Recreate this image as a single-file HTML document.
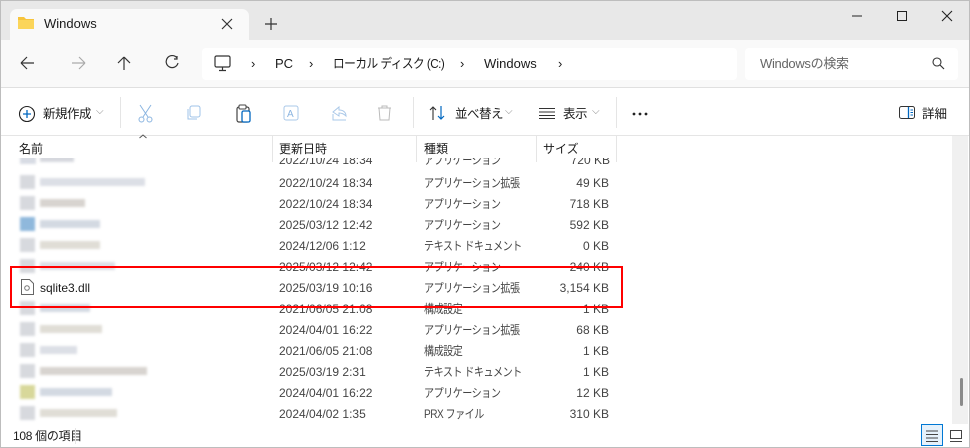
<!DOCTYPE html>
<html><head><meta charset="utf-8"><style>
*{margin:0;padding:0;box-sizing:border-box}
body{width:970px;height:448px;overflow:hidden;background:#fff;font-family:"Liberation Sans","Noto Sans CJK JP",sans-serif;color:#1a1a1a;position:relative;font-size:12px}
.abs{position:absolute}
#frame{position:absolute;left:0;top:0;width:970px;height:448px;border:1px solid #bdbdbd;pointer-events:none}
.t{position:absolute;white-space:nowrap;line-height:16px}
.j{letter-spacing:-0.6px;font-size:12px;transform:scaleX(0.84);transform-origin:left center}
.blk{position:absolute;filter:blur(1.2px)}
</style></head><body>
<!-- title bar -->
<div class="abs" style="left:0;top:0;width:970px;height:40px;background:#e8e8e8"></div>
<div class="abs" style="left:10px;top:9px;width:239px;height:32px;background:#f9f9f9;border-radius:7px 7px 0 0"></div>
<svg class="abs" style="left:17px;top:15px" width="18" height="16"><path d="M1 2h6l2 2h8v10H1z" fill="#f7c43c"/><path d="M1 5h16v9H1z" fill="#fbd55a"/></svg>
<div class="t" style="left:44px;top:16px;font-size:13px">Windows</div>
<svg class="abs" style="left:221px;top:18px" width="12" height="12"><path d="M1 1L11 11M11 1L1 11" stroke="#333" stroke-width="1.2"/></svg>
<svg class="abs" style="left:265px;top:18px" width="12" height="12"><path d="M6 0V12M0 6H12" stroke="#333" stroke-width="1.2"/></svg>
<svg class="abs" style="left:850px;top:10px" width="110" height="14"><path d="M2 6H12" stroke="#222"/><path d="M47.5 1.5h9v9h-9z" stroke="#222" fill="none"/><path d="M92 1L102 11M102 1L92 11" stroke="#222" stroke-width="1.1"/></svg>
<!-- nav bar -->
<div class="abs" style="left:0;top:40px;width:970px;height:48px;background:#f9f9f9;border-bottom:1px solid #e0e0e0"></div>
<svg class="abs" style="left:18px;top:55px" width="170" height="16"><path d="M3 8H16M3 8L9 2M3 8L9 14" stroke="#333" stroke-width="1.2" fill="none"/><path d="M54 8H67M67 8L61 2M67 8L61 14" stroke="#aaa" stroke-width="1.2" fill="none"/><path d="M106 15V2M106 2L100 8M106 2L112 8" stroke="#333" stroke-width="1.2" fill="none"/><path d="M159 3A6 6 0 1 0 160 8M159 1V4H156" stroke="#333" stroke-width="1.2" fill="none"/></svg>
<div class="abs" style="left:202px;top:48px;width:535px;height:32px;background:#fff;border-radius:4px"></div>
<svg class="abs" style="left:214px;top:55px" width="18" height="17"><rect x="1" y="1" width="15" height="11" rx="1.5" stroke="#333" fill="none" stroke-width="1.2"/><path d="M8.5 12V15M5 15.5H12" stroke="#333" stroke-width="1.2"/></svg>
<div class="t" style="left:251px;top:56px;font-size:13px">›</div>
<div class="t" style="left:275px;top:56px;font-size:13px">PC</div>
<div class="t" style="left:309px;top:56px;font-size:13px">›</div>
<div class="t" style="left:333px;top:56px;font-size:13px;letter-spacing:-0.6px;transform:scaleX(0.9);transform-origin:left center">ローカル ディスク (C:)</div>
<div class="t" style="left:460px;top:56px;font-size:13px">›</div>
<div class="t" style="left:484px;top:56px;font-size:13px">Windows</div>
<div class="t" style="left:558px;top:56px;font-size:13px">›</div>
<div class="abs" style="left:745px;top:48px;width:213px;height:32px;background:#fff;border-radius:4px"></div>
<div class="t" style="left:760px;top:56px;font-size:13px;color:#666;letter-spacing:-0.3px">Windowsの検索</div>
<svg class="abs" style="left:932px;top:57px" width="13" height="13"><circle cx="5" cy="5" r="4" stroke="#333" fill="none" stroke-width="1.1"/><path d="M8 8L12 12" stroke="#333" stroke-width="1.2"/></svg>
<!-- toolbar -->
<div class="abs" style="left:0;top:135px;width:970px;height:1px;background:#e5e5e5"></div>
<svg class="abs" style="left:18px;top:105px" width="18" height="18"><circle cx="9" cy="9" r="7.5" stroke="#222" fill="none" stroke-width="1.1"/><path d="M9 5V13M5 9H13" stroke="#0067c0" stroke-width="1.3"/></svg>
<div class="t" style="left:43px;top:106px;font-size:12.5px;letter-spacing:-0.5px">新規作成</div>
<div class="t" style="left:96px;top:104px;font-size:10px;color:#888">⌵</div>
<div class="abs" style="left:120px;top:97px;width:1px;height:31px;background:#e5e5e5"></div>
<svg class="abs" style="left:138px;top:104px" width="280" height="20"><circle cx="3.5" cy="15.5" r="2.5" stroke="#8ab4e0" fill="none"/><circle cx="11.5" cy="15.5" r="2.5" stroke="#8ab4e0" fill="none"/><path d="M2 1L10 13M13 1L5 13" stroke="#8ab4e0"/><rect x="52" y="2" width="10" height="11" rx="2" stroke="#9fc3e8" fill="none"/><path d="M50 5V15H59" stroke="#9fc3e8" fill="none"/><rect x="99" y="3" width="12" height="15" rx="2" stroke="#444" fill="none" stroke-width="1.2"/><rect x="104" y="7" width="8" height="11" rx="1.5" stroke="#0067c0" fill="#fff" stroke-width="1.3"/><rect x="101" y="1" width="7" height="4" rx="1" stroke="#444" fill="#fff"/><rect x="146" y="2" width="14" height="14" rx="2" stroke="#aac8e8" fill="none"/><text x="149" y="13" font-size="10" fill="#8ab4e0" font-family="Liberation Sans">A</text><path d="M195 8l6-5v3c5 0 7 3 7 6-2-2-4-3-7-3v3z" stroke="#aac8e8" fill="none"/><path d="M195 10V16H208" stroke="#aac8e8" fill="none"/><path d="M240 4H253M244 4V2H249V4M241 4L242 16H251L252 4" stroke="#bbb" fill="none"/></svg>
<div class="abs" style="left:413px;top:97px;width:1px;height:31px;background:#e5e5e5"></div>
<svg class="abs" style="left:429px;top:105px" width="18" height="16"><path d="M4 15V2M1 5L4 2L7 5" stroke="#333" fill="none" stroke-width="1.1"/><path d="M12 1V14M9 11L12 14L15 11" stroke="#0067c0" fill="none" stroke-width="1.2"/></svg>
<div class="t" style="left:455px;top:106px;font-size:12.5px;letter-spacing:-0.5px">並べ替え</div>
<div class="t" style="left:505px;top:104px;font-size:10px;color:#888">⌵</div>
<svg class="abs" style="left:539px;top:107px" width="16" height="12"><path d="M0 1.5H16M0 5H16M0 8.5H16M0 11.5H16" stroke="#333"/></svg>
<div class="t" style="left:563px;top:106px;font-size:12.5px;letter-spacing:-0.5px">表示</div>
<div class="t" style="left:592px;top:104px;font-size:10px;color:#888">⌵</div>
<div class="abs" style="left:616px;top:97px;width:1px;height:31px;background:#e5e5e5"></div>
<svg class="abs" style="left:632px;top:112px" width="20" height="4"><circle cx="2" cy="2" r="1.4" fill="#222"/><circle cx="8" cy="2" r="1.4" fill="#222"/><circle cx="14" cy="2" r="1.4" fill="#222"/></svg>
<svg class="abs" style="left:899px;top:106px" width="17" height="14"><rect x="0.5" y="0.5" width="15" height="12" rx="2" stroke="#333" fill="none"/><path d="M9.5 1V12" stroke="#0067c0" stroke-width="1.3"/><path d="M11.5 4H14M11.5 6.5H14M11.5 9H14" stroke="#0067c0"/></svg>
<div class="t" style="left:922px;top:106px;font-size:12.5px">詳細</div>
<!-- header -->
<svg class="abs" style="left:139px;top:134px" width="8" height="5"><path d="M0.5 4L4 1L7.5 4" stroke="#555" fill="none"/></svg>
<div class="t" style="left:19px;top:141px">名前</div>
<div class="t" style="left:279px;top:141px">更新日時</div>
<div class="t" style="left:424px;top:141px">種類</div>
<div class="t" style="left:543px;top:141px">サイズ</div>
<div class="abs" style="left:272px;top:136px;width:1px;height:26px;background:#e5e5e5"></div>
<div class="abs" style="left:416px;top:136px;width:1px;height:26px;background:#e5e5e5"></div>
<div class="abs" style="left:536px;top:136px;width:1px;height:26px;background:#e5e5e5"></div>
<div class="abs" style="left:616px;top:136px;width:1px;height:26px;background:#e5e5e5"></div>
<!-- rows -->
<div class="abs" style="left:0;top:158px;width:950px;height:8px;overflow:hidden;color:#444">
<div class="blk" style="left:20px;top:-4px;width:16px;height:10px;background:#d8dce4"></div><div class="blk" style="left:40px;top:-4px;width:34px;height:8px;background:#d6d8de"></div>
<div class="t" style="left:279px;top:-6px">2022/10/24 18:34</div><div class="t j" style="left:424px;top:-6px">アプリケーション</div><div class="t" style="left:570px;top:-6px;width:40px;text-align:right">720 KB</div>
</div>
<div id="rows" class="abs" style="left:0;top:173px;width:950px;color:#444"></div>
<script>
var r=[["2022/10/24 18:34","アプリケーション拡張","49 KB",105],["2022/10/24 18:34","アプリケーション","718 KB",45],["2025/03/12 12:42","アプリケーション","592 KB",60],["2024/12/06 1:12","テキスト ドキュメント","0 KB",60],["2025/03/12 12:42","アプリケーション","240 KB",75],["2025/03/19 10:16","アプリケーション拡張","3,154 KB",0],["2021/06/05 21:08","構成設定","1 KB",50],["2024/04/01 16:22","アプリケーション拡張","68 KB",62],["2021/06/05 21:08","構成設定","1 KB",37],["2025/03/19 2:31","テキスト ドキュメント","1 KB",107],["2024/04/01 16:22","アプリケーション","12 KB",72],["2024/04/02 1:35","PRX ファイル","310 KB",77]];
var h="";var cols=["#dcdfe6","#d8d4d0","#d3d9e2","#e0ddd6"];
r.forEach(function(x,i){var y=i*21;
if(x[3]){h+='<div class="blk" style="left:20px;top:'+(y+2)+'px;width:15px;height:14px;background:'+(i==2?'#8fb8dc':i==10?'#d8d89a':'#d7d9de')+'"></div><div class="blk" style="left:40px;top:'+(y+5)+'px;width:'+x[3]+'px;height:8px;background:'+cols[i%4]+'"></div>';}
else{h+='<svg class="abs" style="left:21px;top:'+(y+1)+'px" width="13" height="16"><path d="M0.5 0.5H8.5L12.5 4.5V15.5H0.5Z" stroke="#666" fill="#fff"/><circle cx="6" cy="9" r="2.3" stroke="#777" fill="none"/></svg><div class="t" style="left:40px;top:'+(y+2)+'px;color:#1a1a1a">sqlite3.dll</div>';}
h+='<div class="t" style="left:279px;top:'+(y+2)+'px">'+x[0]+'</div><div class="t j" style="left:424px;top:'+(y+2)+'px">'+x[1]+'</div><div class="t" style="left:540px;top:'+(y+2)+'px;width:69px;text-align:right">'+x[2]+'</div>';});
document.getElementById('rows').innerHTML=h;
</script>
<div class="abs" style="left:10px;top:266px;width:613px;height:42px;border:2px solid #f00"></div>
<!-- scrollbar -->
<div class="abs" style="left:952px;top:136px;width:16px;height:288px;background:#f0f0f0"></div>
<div class="abs" style="left:960px;top:378px;width:3px;height:28px;background:#8a8a8a;border-radius:2px"></div>
<!-- status -->
<div class="t" style="left:13px;top:428px;font-size:12px;letter-spacing:-0.3px">108 個の項目</div>
<div class="abs" style="left:75px;top:428px;width:1px;height:16px;background:#e5e5e5"></div>
<div class="abs" style="left:921px;top:424px;width:22px;height:22px;background:#e5f1fb;border:1px solid #0078d4"></div>
<svg class="abs" style="left:925px;top:429px" width="40" height="14"><path d="M1 2H13M1 5.5H13M1 9H13M1 12.5H13" stroke="#444"/><rect x="25.5" y="1.5" width="11" height="8" stroke="#444" fill="none"/><path d="M25 12.5H37" stroke="#444"/></svg>
<div id="frame"></div>
</body></html>
